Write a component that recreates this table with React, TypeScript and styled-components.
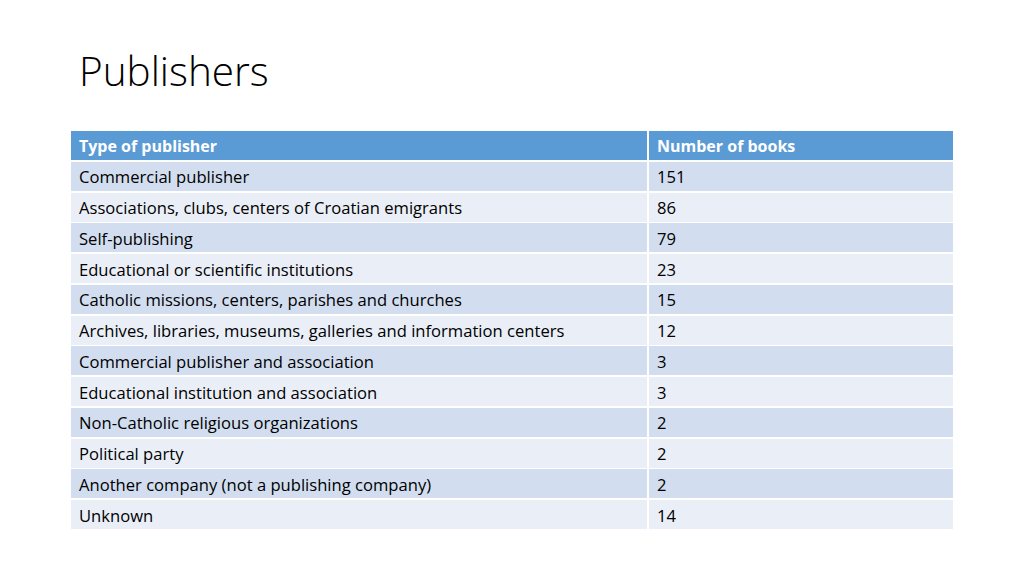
import React from "react";
import styled, { createGlobalStyle } from "styled-components";

const Global = createGlobalStyle`
  html, body { margin: 0; padding: 0; background: #ffffff; }
  body { font-family: "Open Sans", sans-serif; }
`;

const Slide = styled.div`
  width: 1024px;
  height: 576px;
  background: #ffffff;
  box-sizing: border-box;
  padding: 44px 71px 0 71px;
  display: flex;
  flex-direction: column;
`;

const Title = styled.h1`
  margin: 0 0 0 8px;
  font-family: "Open Sans", sans-serif;
  font-weight: 300;
  font-size: 40.5px;
  line-height: 54px;
  color: #000000;
`;

const Table = styled.div`
  margin-top: 33px;
  width: 882px;
  display: grid;
  grid-template-columns: 576px 304px;
  column-gap: 2px;
  row-gap: 1.75px;
  grid-auto-rows: 29px;
`;

const Cell = styled.div<{ $kind: "head" | "odd" | "even" }>`
  display: flex;
  align-items: center;
  box-sizing: border-box;
  padding: 1px 0 0 8px;
  font-family: "Open Sans", sans-serif;
  font-size: ${(p) => (p.$kind === "head" ? "16px" : "16.6px")};
  font-variant-ligatures: none;
  color: ${(p) => (p.$kind === "head" ? "#ffffff" : "#000000")};
  font-weight: ${(p) => (p.$kind === "head" ? 700 : 400)};
  background: ${(p) =>
    p.$kind === "head" ? "#5b9bd5" : p.$kind === "odd" ? "#d2deef" : "#eaeff7"};
  white-space: nowrap;
`;

const rows: [string, string][] = [
  ["Commercial publisher", "151"],
  ["Associations, clubs, centers of Croatian emigrants", "86"],
  ["Self-publishing", "79"],
  ["Educational or scientific institutions", "23"],
  ["Catholic missions, centers, parishes and churches", "15"],
  ["Archives, libraries, museums, galleries and information centers", "12"],
  ["Commercial publisher and association", "3"],
  ["Educational institution and association", "3"],
  ["Non-Catholic religious organizations", "2"],
  ["Political party", "2"],
  ["Another company (not a publishing company)", "2"],
  ["Unknown", "14"],
];

export default function App() {
  return (
    <>
      <Global />
      <Slide>
        <Title>Publishers</Title>
        <Table>
          <Cell $kind="head">Type of publisher</Cell>
          <Cell $kind="head">Number of books</Cell>
          {rows.map(([a, b], i) => {
            const k = i % 2 === 0 ? "odd" : "even";
            return (
              <React.Fragment key={a}>
                <Cell $kind={k}>{a}</Cell>
                <Cell $kind={k}>{b}</Cell>
              </React.Fragment>
            );
          })}
        </Table>
      </Slide>
    </>
  );
}
